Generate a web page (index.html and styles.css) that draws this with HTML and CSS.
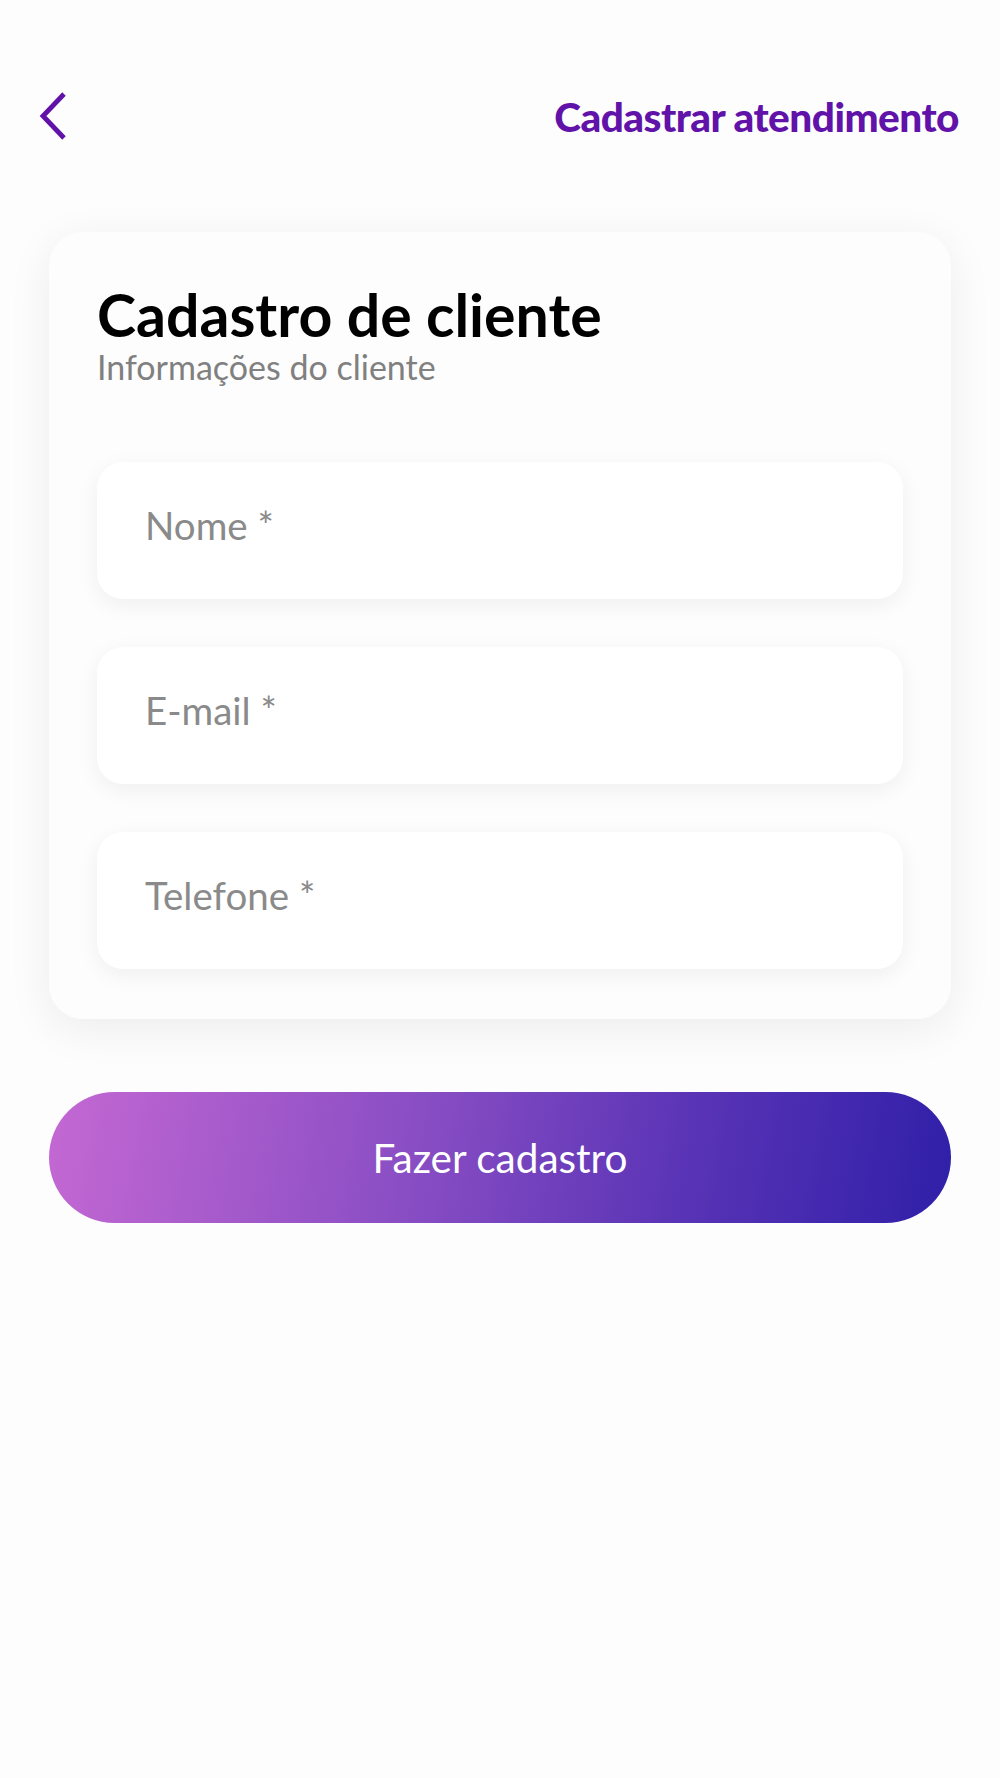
FILE: index.html
```html
<!DOCTYPE html>
<html lang="pt-BR">
<head>
    <meta charset="UTF-8">
    <meta name="viewport" content="width=device-width, initial-scale=1.0">
    <title>Cadastrar atendimento</title>
    <link rel="stylesheet" href="styles.css">
</head>
<body>
    <header class="topbar">
        <a class="back" href="#" aria-label="Voltar">
            <svg width="28" height="48" viewBox="0 0 28 48">
                <polyline points="25,2 4,24 25,46" fill="none" stroke="#6112a8" stroke-width="4.8" />
            </svg>
        </a>
        <h2 class="topbar-title">Cadastrar atendimento</h2>
    </header>

    <main class="content">
        <!-- Client form card -->
        <form class="card" id="client-form">
            <h1 class="card-title">Cadastro de cliente</h1>
            <p class="card-subtitle">Informações do cliente</p>

            <div class="fields">
                <input class="field" type="text" id="name" placeholder="Nome *" required />
                <input class="field" type="email" id="email" placeholder="E-mail *" required />
                <input class="field" type="tel" id="phone" placeholder="Telefone *" required />
            </div>
        </form>

        <button class="submit" type="submit" form="client-form">Fazer cadastro</button>
    </main>
</body>
</html>
```

FILE: styles.css
```css
body {
    font-family: Lato, "Open Sans", sans-serif;
    margin: 0;
    padding: 0;
    background-color: #fdfdfd;
    color: #000;
    min-height: 100vh;
}
.topbar {
    display: flex;
    align-items: center;
    justify-content: space-between;
    padding: 92px 41px 0 39px;
    height: 48px;
}
.back {
    display: flex;
}
.topbar-title {
    margin: 0;
    color: #6112a8;
    font-size: 40.5px;
    font-weight: 900;
    letter-spacing: -0.5px;
}
.content {
    padding: 92px 49px 0;
}
.card {
    background: #fdfdfd;
    border-radius: 34px;
    box-shadow: 0 10px 45px rgba(0, 0, 0, 0.07);
    padding: 50px 48px 50px;
}
.card-title {
    margin: 0;
    font-size: 59px;
    font-weight: 700;
    line-height: 66px;
}
.card-subtitle {
    margin: 0;
    color: #808080;
    font-size: 34px;
    line-height: 38px;
}
.fields {
    display: flex;
    flex-direction: column;
    gap: 48px;
    margin-top: 76px;
}
.field {
    height: 137px;
    box-sizing: border-box;
    border: none;
    border-radius: 26px;
    background: #fff;
    box-shadow: 0 6px 22px rgba(0, 0, 0, 0.06);
    padding: 0 48px 12px;
    font-family: inherit;
    font-size: 38.5px;
    color: #333;
    outline: none;
}
.field::placeholder {
    color: #8a8a8a;
}
.submit {
    display: block;
    width: 100%;
    height: 131px;
    margin-top: 73px;
    border: none;
    border-radius: 66px;
    background: linear-gradient(100deg, #c468d3 0%, #8a4ec4 40%, #5a34b6 70%, #2f1fa8 100%);
    color: #fff;
    font-family: inherit;
    font-size: 40.5px;
    cursor: pointer;
}
```
